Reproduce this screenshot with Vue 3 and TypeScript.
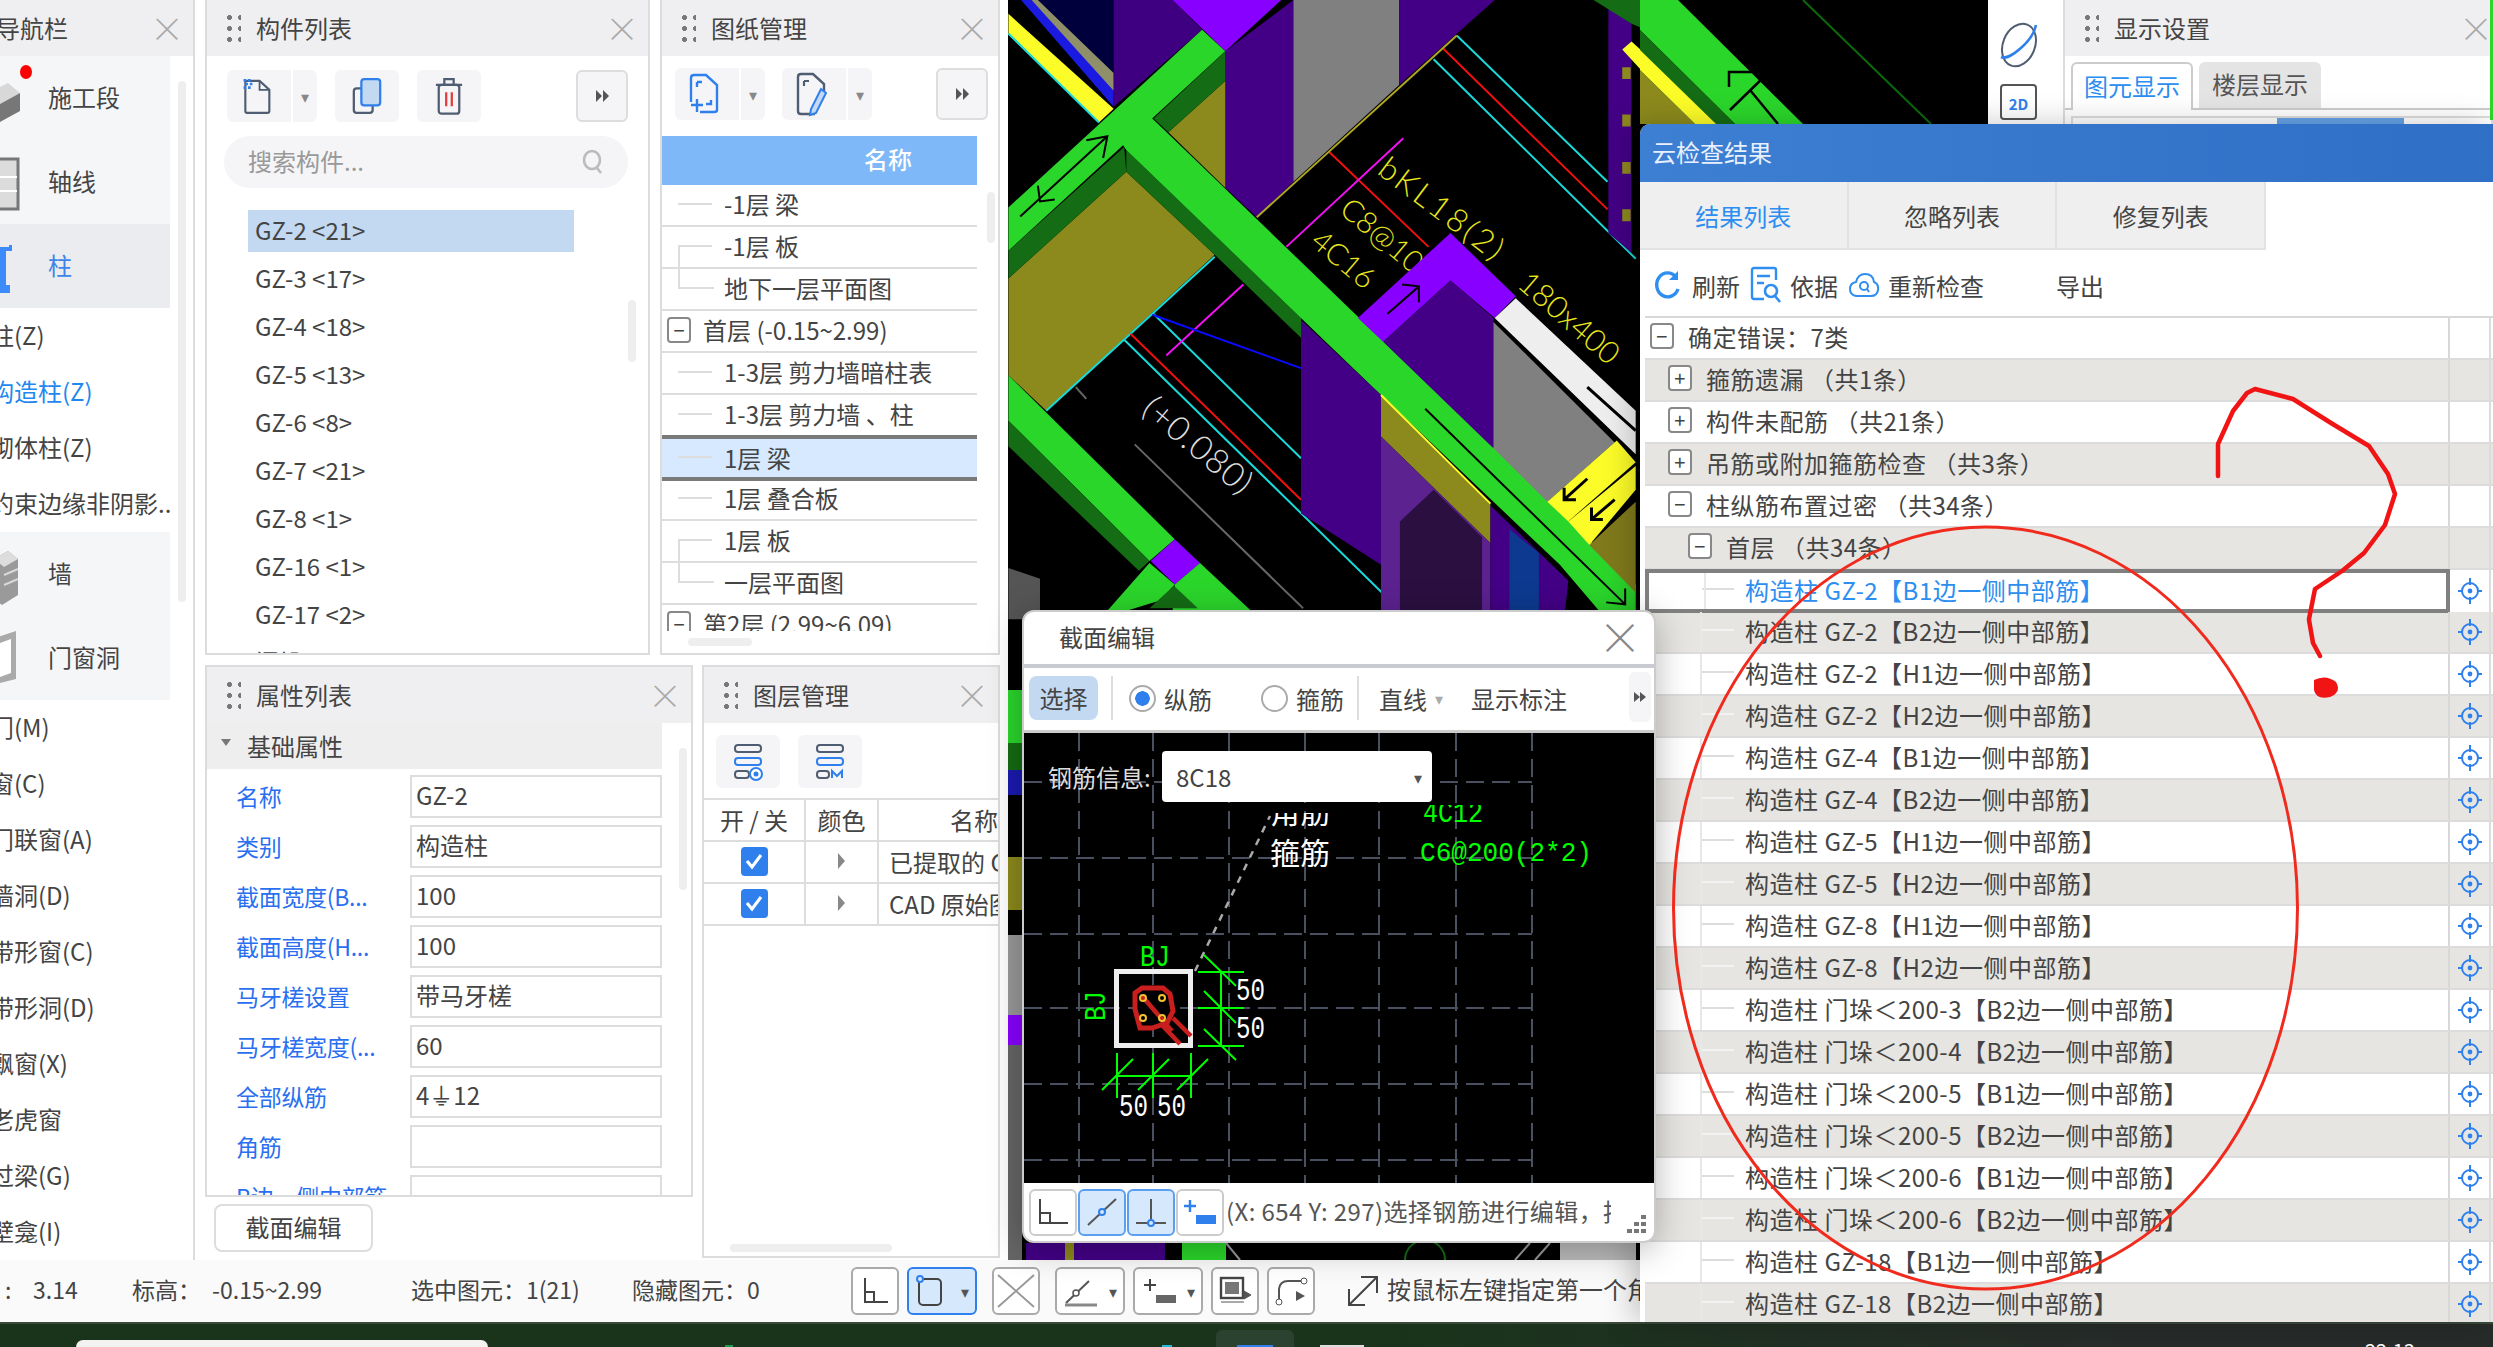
<script setup lang="ts">
const navRows: { t: string; kind: string; icon?: string; color?: string }[] = [
  { t: '施工段', kind: 'big', icon: 'seg' },
  { t: '轴线', kind: 'big', icon: 'axis' },
  { t: '柱', kind: 'active', icon: 'col' },
  { t: '柱(Z)', kind: 'sub' },
  { t: '构造柱(Z)', kind: 'sub', color: 'blue' },
  { t: '砌体柱(Z)', kind: 'sub' },
  { t: '约束边缘非阴影..', kind: 'sub' },
  { t: '墙', kind: 'big', icon: 'wall' },
  { t: '门窗洞', kind: 'big', icon: 'door' },
  { t: '门(M)', kind: 'sub' },
  { t: '窗(C)', kind: 'sub' },
  { t: '门联窗(A)', kind: 'sub' },
  { t: '墙洞(D)', kind: 'sub' },
  { t: '带形窗(C)', kind: 'sub' },
  { t: '带形洞(D)', kind: 'sub' },
  { t: '飘窗(X)', kind: 'sub' },
  { t: '老虎窗', kind: 'sub' },
  { t: '过梁(G)', kind: 'sub' },
  { t: '壁龛(I)', kind: 'sub' }
]
const parts = ['GZ-2 <21>', 'GZ-3 <17>', 'GZ-4 <18>', 'GZ-5 <13>', 'GZ-6 <8>', 'GZ-7 <21>', 'GZ-8 <1>', 'GZ-16 <1>', 'GZ-17 <2>', '门垛 200-3 <1 100*150>']
const drawings: { t: string; box?: string; sel?: boolean; last?: boolean }[] = [
  { t: '-1层 梁' },
  { t: '-1层 板' },
  { t: '地下一层平面图', last: true },
  { t: '首层 (-0.15~2.99)', box: '−' },
  { t: '1-3层 剪力墙暗柱表' },
  { t: '1-3层 剪力墙 、柱' },
  { t: '1层 梁', sel: true },
  { t: '1层 叠合板' },
  { t: '1层 板' },
  { t: '一层平面图', last: true },
  { t: '第2层 (2.99~6.09)', box: '−' }
]
const props = [
  ['名称', 'GZ-2'],
  ['类别', '构造柱'],
  ['截面宽度(B...', '100'],
  ['截面高度(H...', '100'],
  ['马牙槎设置', '带马牙槎'],
  ['马牙槎宽度(...', '60'],
  ['全部纵筋', '4⏚12'],
  ['角筋', ''],
  ['B边一侧中部筋', '']
]
const layers = ['已提取的 CAD 图层', 'CAD 原始图层']
const statusItems: [string, number][] = [
  [':', 28],
  ['3.14', 99],
  ['标高：', 80],
  ['-0.15~2.99', 199],
  ['选中图元：1(21)', 221],
  ['隐藏图元：0', 220]
]
const checks: { t: string; l: number; box?: string }[] = [
  { t: '确定错误：7类', l: 0, box: '−' },
  { t: '箍筋遗漏 （共1条）', l: 1, box: '+' },
  { t: '构件未配筋 （共21条）', l: 1, box: '+' },
  { t: '吊筋或附加箍筋检查 （共3条）', l: 1, box: '+' },
  { t: '柱纵筋布置过密 （共34条）', l: 1, box: '−' },
  { t: '首层 （共34条）', l: 2, box: '−' },
  ...[
    'GZ-2【B1', 'GZ-2【B2', 'GZ-2【H1', 'GZ-2【H2', 'GZ-4【B1', 'GZ-4【B2', 'GZ-5【H1', 'GZ-5【H2', 'GZ-8【H1', 'GZ-8【H2',
    '门垛＜200-3【B2', '门垛＜200-4【B2', '门垛＜200-5【B1', '门垛＜200-5【B2', '门垛＜200-6【B1', '门垛＜200-6【B2', 'GZ-18【B1', 'GZ-18【B2'
  ].map((s) => ({ t: '构造柱 ' + s + '边一侧中部筋】', l: 3 }))
]
const gridH = [781, 857, 933, 1007, 1083, 1159]
const gridV = [1079, 1153, 1229, 1305, 1379, 1456, 1532]
</script>

<template>
  <div class="app">
    <div class="upper">
      <!-- navigation -->
      <aside class="nav">
        <header class="phead nav-head"><span>导航栏</span><i class="x">×</i></header>
        <div class="nav-list">
          <div v-for="r in navRows" :key="r.t" class="nrow" :class="[r.kind, r.color]">
            <svg v-if="r.icon" class="nic" viewBox="0 0 48 56">
              <template v-if="r.icon === 'seg'">
                <path d="M-12 24 8 14 20 24 -2 36Z" fill="#d8d8d8" />
                <path d="M-2 36 20 24V42L-2 54Z" fill="#777" />
              </template>
              <template v-if="r.icon === 'axis'">
                <path d="M-6 6H18V56H-6Z" fill="#dcdcdc" stroke="#777" stroke-width="3" />
                <path d="M-6 24H17M-6 38H17" stroke="#fff" stroke-width="2" />
              </template>
              <template v-if="r.icon === 'col'">
                <path d="M0 10H9V8H12V14H6V48H10V56H-4V6H0Z" fill="#3d8bfa" />
              </template>
              <template v-if="r.icon === 'wall'">
                <path d="M-6 14 8 6 18 14 18 50 2 60-6 54Z" fill="#9a9a9a" />
                <path d="M-6 14 8 6 18 14 4 22Z" fill="#ddd" />
                <path d="M4 30 18 24M4 40 18 34" stroke="#d8d8d8" stroke-width="2" />
              </template>
              <template v-if="r.icon === 'door'">
                <path d="M-8 10 16 2V50L-8 56Z" fill="#aaa" />
                <path d="M0 14 11 10V44L0 48Z" fill="#fff" />
              </template>
            </svg>
            <span class="ntext">{{ r.t }}</span>
          </div>
        </div>
        <b class="reddot"></b>
        <b class="nav-scroll"></b>
      </aside>

      <!-- docked panels -->
      <section class="docks">
        <div class="dock-row top">
          <div class="panel parts">
            <header class="phead"><i class="grip"></i><span>构件列表</span><i class="x">×</i></header>
            <div class="tools">
              <div class="tbtn split">
                <span class="tmain">
                  <svg width="32" height="42" viewBox="0 0 36 42">
                    <path d="M6 4H22L33 14V38Q33 40 31 40H8Q6 40 6 38Z" fill="none" stroke="#4f5d72" stroke-width="2.4" />
                    <path d="M22 4V14H33" fill="none" stroke="#4f5d72" stroke-width="2" />
                    <path d="M4 2h3v3H4zM9 2h3v3H9zM6 6h3v3H6zM11 6h3v3h-3zM4 10h3v3H4zM9 10h3v3H9z" fill="#2f80ed" />
                  </svg>
                </span>
                <span class="tdrop">▾</span>
              </div>
              <div class="tbtn">
                <svg width="32" height="42" viewBox="0 0 34 42">
                  <rect x="3" y="13" width="20" height="26" rx="3" fill="none" stroke="#4f5d72" stroke-width="2.4" />
                  <rect x="11" y="3" width="20" height="28" rx="3" fill="#c3d9f2" stroke="#2f80ed" stroke-width="2.4" />
                </svg>
              </div>
              <div class="tbtn">
                <svg width="28" height="44" viewBox="0 0 30 44">
                  <path d="M1 10H29M10 10V4H20V10" fill="none" stroke="#4f5d72" stroke-width="2.4" />
                  <rect x="4" y="10" width="22" height="31" rx="3" fill="none" stroke="#4f5d72" stroke-width="2.4" />
                  <path d="M12 18V33M18 18V33" stroke="#e23b3b" stroke-width="2.4" />
                </svg>
              </div>
              <button class="more"><i class="tri"></i><i class="tri"></i></button>
            </div>
            <div class="search">
              <span>搜索构件...</span>
              <svg width="22" height="26" viewBox="0 0 22 26">
                <ellipse cx="10" cy="12" rx="8" ry="9" fill="none" stroke="#bbb" stroke-width="2.6" />
                <path d="M15 20 19 25" stroke="#bbb" stroke-width="2.6" />
              </svg>
            </div>
            <ul class="plist">
              <li v-for="(p, i) in parts" :key="p" :class="{ on: i === 0 }">{{ p }}</li>
            </ul>
            <b class="pscroll"></b>
          </div>

          <div class="panel draws">
            <header class="phead"><i class="grip"></i><span>图纸管理</span><i class="x">×</i></header>
            <div class="tools dtools">
              <div class="tbtn split">
                <span class="tmain">
                  <svg width="32" height="44" viewBox="0 0 32 44">
                    <path d="M3 30V6Q3 3 6 3H18L29 13V38Q29 40 26 40H12" fill="none" stroke="#2f80ed" stroke-width="2.4" />
                    <path d="M9 10H14M9 10V15M23 28V32H18M3 33H15M9 27V40" fill="none" stroke="#2f80ed" stroke-width="2.4" />
                  </svg>
                </span>
                <span class="tdrop">▾</span>
              </div>
              <div class="tbtn split">
                <span class="tmain">
                  <svg width="32" height="46" viewBox="0 0 32 46">
                    <path d="M20 43H6Q3 43 3 40V6Q3 3 6 3H18L29 13V20" fill="none" stroke="#4f5d72" stroke-width="2.4" />
                    <path d="M9 10H14M9 10V15" fill="none" stroke="#4f5d72" stroke-width="2.2" />
                    <path d="M26 18 31 22 21 42 15 44 16 38Z" fill="#c3d9f2" stroke="#2f80ed" stroke-width="2" />
                  </svg>
                </span>
                <span class="tdrop">▾</span>
              </div>
              <button class="more"><i class="tri"></i><i class="tri"></i></button>
            </div>
            <div class="dhead">名称</div>
            <div class="dtree">
              <div v-for="d in drawings" :key="d.t" class="drow" :class="{ sel: d.sel, folder: d.box }">
                <i v-if="d.box" class="box">{{ d.box }}</i>
                <i v-else class="guide" :class="{ end: d.last }"></i>
                <span>{{ d.t }}</span>
              </div>
            </div>
            <b class="dscroll-v"></b>
            <b class="dscroll-h"></b>
          </div>
        </div>

        <div class="dock-row bottom">
          <div class="prop-col">
            <div class="panel props">
              <header class="phead"><i class="grip"></i><span>属性列表</span><i class="x">×</i></header>
              <div class="pgroup"><i class="tri-d"></i>基础属性</div>
              <div class="pbody">
                <div v-for="p in props" :key="p[0]" class="prow">
                  <label>{{ p[0] }}</label>
                  <div class="pval">{{ p[1] }}</div>
                </div>
              </div>
              <b class="pr-scroll"></b>
            </div>
            <button class="secbtn">截面编辑</button>
          </div>
          <div class="panel layers">
            <header class="phead"><i class="grip"></i><span>图层管理</span><i class="x">×</i></header>
            <div class="tools ltools">
              <div class="tbtn sq">
                <svg width="32" height="40" viewBox="0 0 32 40">
                  <rect x="3" y="3" width="26" height="7" rx="3" fill="none" stroke="#4f5d72" stroke-width="2" />
                  <rect x="3" y="16" width="26" height="7" rx="3" fill="none" stroke="#2f80ed" stroke-width="2" />
                  <rect x="3" y="29" width="14" height="7" rx="3" fill="none" stroke="#4f5d72" stroke-width="2" />
                  <circle cx="24" cy="32" r="6" fill="#fff" stroke="#2f80ed" stroke-width="2" />
                  <circle cx="24" cy="32" r="2.5" fill="#2f80ed" />
                </svg>
              </div>
              <div class="tbtn sq">
                <svg width="32" height="40" viewBox="0 0 32 40">
                  <rect x="3" y="3" width="26" height="7" rx="3" fill="none" stroke="#4f5d72" stroke-width="2" />
                  <rect x="3" y="16" width="26" height="7" rx="3" fill="none" stroke="#2f80ed" stroke-width="2" />
                  <rect x="3" y="29" width="12" height="7" rx="3" fill="none" stroke="#4f5d72" stroke-width="2" />
                  <path d="M18 36V29L23 34 28 29V36" fill="none" stroke="#2f80ed" stroke-width="2" />
                </svg>
              </div>
            </div>
            <div class="ltable">
              <div class="lrow lhead"><span class="c1">开 / 关</span><span class="c2">颜色</span><span class="c3 right">名称</span></div>
              <div v-for="l in layers" :key="l" class="lrow">
                <span class="c1"><i class="chk"><svg width="20" height="20" viewBox="0 0 20 20"><path d="M3 10 8 16 17 4" fill="none" stroke="#fff" stroke-width="3" /></svg></i></span>
                <span class="c2"><i class="tri gray"></i></span>
                <span class="c3">{{ l }}</span>
              </div>
            </div>
            <b class="l-scroll"></b>
          </div>
        </div>
      </section>

      <!-- 3D canvas -->
      <main class="canvas">
        <svg width="980" height="1260" viewBox="1008 0 980 1260">
          <rect x="1008" y="0" width="980" height="1260" fill="#000" />
          <g class="z" transform="translate(1000 0) scale(.421 .395)">
            <!-- top-left beam -->
            <path d="M75 0H270V190Z" fill="#00003c" />
            <path d="M50 0H75L270 205V270Z" fill="#1a1ae0" />
            <path d="M75 0H90L270 185V230Z" fill="#8f8f6a" />
            <path d="M20 35 270 275 235 310 20 88Z" fill="#fcfc28" />
            <path d="M20 85 235 310" stroke="#19d9d9" stroke-width="2" fill="none" />
            <!-- columns -->
            <path d="M270 0H410L480 75 270 270Z" fill="#3e0080" />
            <path d="M535 130 697 0V460L610 550 535 475Z" fill="#430086" />
            <path d="M410 0H668L535 130Z" fill="#8800ff" />
            <path d="M697 0H948V215L697 460Z" fill="#808080" />
            <path d="M948 0H1175L948 215Z" fill="#430086" />
            <path d="M400 335 535 205V475Z" fill="#8c8a1c" />
            <path d="M20 705 300 435 510 645 110 1040 20 950Z" fill="#8c8a1c" />
            <!-- lines -->
            <path d="M1085 90 1443 460M1030 150 1510 655M510 650 110 1040M365 795 715 1160M295 860 950 1545" stroke="#19d9d9" stroke-width="2" fill="none" />
            <path d="M1052 122 1443 530M782 385 1018 625M310 845 715 1265" stroke="#f01010" stroke-width="2" fill="none" />
            <path d="M958 350 680 625M578 720 395 900" stroke="#f010f0" stroke-width="2" fill="none" />
            <path d="M362 797 715 932" stroke="#0a0aff" stroke-width="2" fill="none" />
            <path d="M1085 90 610 550" stroke="#b0a820" stroke-width="2" fill="none" />
            <path d="M320 1125 720 1540M180 980 205 1010" stroke="#666" stroke-width="2" fill="none" />
          </g>
          <!-- annotations lying under the upper geometry -->
          <text class="cad" transform="translate(1376 173) rotate(37)">bKL18(2)</text>
          <text class="cad t" transform="translate(1338 212) rotate(40)">C8@10(</text>
          <text class="cad t" transform="translate(1309 244) rotate(40)">4C16</text>
          <text class="cad n" transform="translate(1516 286) rotate(41)">180x400</text>
          <text class="cad w" transform="translate(1140 412) rotate(40)">(+0.080)</text>
          <g class="z" transform="translate(1000 0) scale(.421 .395)">
            <!-- upper-left arm -->
            <path d="M20 525 480 75 535 130 20 635Z" fill="#2bd62b" />
            <path d="M535 130V205L400 335 365 300Z" fill="#146c14" />
            <path d="M20 635 295 372 300 435 20 705Z" fill="#146c14" />
            <!-- main diagonal -->
            <path d="M510 645 300 435V380L715 805V855Z" fill="#146c14" />
            <path d="M265 325 360 298 1510 1480V1568H1440L1330 1430 905 1000 300 380Z" fill="#2bd62b" />
            <!-- lower-left arm -->
            <path d="M20 950 415 1365 355 1420 20 1065Z" fill="#2bd62b" />
            <path d="M20 1065 355 1420 330 1445 20 1130Z" fill="#146c14" />
            <path d="M415 1365 475 1425 415 1480 358 1420Z" fill="#8800ff" />
            <path d="M355 1425 415 1480 380 1520 235 1568V1570Z" fill="#2bd62b" />
            <path d="M475 1425 595 1545 410 1545 415 1480Z" fill="#2bd62b" />
            <path d="M413 1483 470 1540H355Z" fill="#146c14" />
            <path d="M20 1438 95 1465V1568H20Z" fill="#555" />
            <!-- middle column -->
            <path d="M715 810 905 1000V1430L715 1300Z" fill="#430086" />
            <path d="M850 805 1070 590 1225 750 1175 805 1070 710 910 865Z" fill="#8800ff" />
            <path d="M910 865 1070 710 1172 805V1135Z" fill="#430086" />
            <path d="M1172 815 1460 1120 1300 1270 1172 1135Z" fill="#808080" />
            <path d="M1175 805 1225 755 1510 1040V1150Z" fill="#eee" />
            <path d="M905 1000 1165 1275V1375L905 1105Z" fill="#8c8a1c" />
            <path d="M905 1000 1165 1275" stroke="#fcfc28" stroke-width="2" fill="none" />
            <path d="M1300 1270 1465 1115 1510 1170 1350 1320Z" fill="#fcfc28" />
            <path d="M1350 1320 1510 1180V1240L1400 1380Z" fill="#fcfc28" />
            <path d="M1400 1380 1510 1270V1500Z" fill="#807a1c" />
            <path d="M905 1105 1165 1375V1568H905Z" fill="#5c2290" />
            <path d="M950 1320 1030 1240 1145 1360V1568H950Z" fill="#2a0f40" />
            <path d="M1165 1280 1350 1470 1340 1568H1165Z" fill="#430086" />
            <path d="M1210 1340 1280 1400V1568H1210Z" fill="#0d3a90" />
            <!-- right column -->
            <path d="M1445 20 1500 60V640L1445 590Z" fill="#430086" />
            <path d="M1478 170h20v30h-20zM1478 290h20v30h-20zM1478 410h20v30h-20zM1478 530h20v30h-20z" fill="#8c8a1c" />
            <path d="M1410 0H1568V90L1500 60Z" fill="#146c14" />
            <path d="M1478 125 1500 105 1568 170V230Z" fill="#fcfc28" />
            <!-- arrows -->
            <path d="M48 548 255 345M205 355 255 345 245 400M90 470 95 510 130 505" fill="none" stroke="#000" stroke-width="2" />
            <path d="M920 795 995 725M955 720 995 725 995 765" fill="none" stroke="#000" stroke-width="2" />
            <path d="M1010 1035 1485 1530M1440 1525 1485 1530 1485 1490" fill="none" stroke="#000" stroke-width="2" />
            <path d="M1395 980 1510 1090" fill="none" stroke="#000" stroke-width="3" />
            <path d="M1340 1265 1395 1212M1340 1235V1265H1368M1405 1315 1460 1265M1405 1285V1315H1432" fill="none" stroke="#000" stroke-width="3" />
          </g>
          <!-- right part of canvas, real coordinates -->
          <path d="M1640 0H1678L1803 124H1735L1640 30Z" fill="#2bd62b" />
          <path d="M1640 30 1735 124H1690L1640 75Z" fill="#146c14" />
          <path d="M1640 50 1716 124H1695L1640 70Z" fill="#fcfc28" />
          <path d="M1640 70 1695 124H1640Z" fill="#8c8a1c" />
          <path d="M1803 0 1931 124" stroke="#0a6a0a" stroke-width="2" />
          <path d="M1730 110 1769 72 M1729 87V72H1752" fill="none" stroke="#000" stroke-width="2.5" />
          <path d="M1750 90 1778 124" stroke="#000" stroke-width="2.5" />
          <!-- strips left/below the dialog -->
          <rect x="1008" y="690" width="14" height="53" fill="#2bd62b" />
          <rect x="1008" y="743" width="14" height="27" fill="#146c14" />
          <rect x="1008" y="770" width="14" height="25" fill="#1a1ab0" />
          <rect x="1008" y="795" width="14" height="62" fill="#000" />
          <rect x="1008" y="857" width="14" height="53" fill="#8c8a1c" />
          <rect x="1008" y="935" width="14" height="80" fill="#999" />
          <rect x="1008" y="1015" width="14" height="30" fill="#8800ff" />
          <rect x="1008" y="1045" width="14" height="215" fill="#666" />
          <rect x="1026" y="1243" width="39" height="17" fill="#430086" />
          <rect x="1065" y="1243" width="9" height="17" fill="#8c8a1c" />
          <rect x="1074" y="1243" width="91" height="17" fill="#430086" />
          <rect x="1182" y="1243" width="44" height="17" fill="#2bd62b" />
          <path d="M1226 1243 1240 1260M1530 1243 1515 1260M1550 1243 1535 1260" stroke="#999" stroke-width="2" />
          <circle cx="1425" cy="1260" r="20" fill="none" stroke="#146c14" stroke-width="2" />
          <rect x="1560" y="1243" width="76" height="17" fill="#bbb" />
        </svg>
      </main>

      <div class="strip">
        <svg width="44" height="52" viewBox="0 0 44 52" class="planet">
          <ellipse cx="22" cy="26" rx="16" ry="22" fill="none" stroke="#4f5d72" stroke-width="2" transform="rotate(22 22 26)" />
          <path d="M4 38C12 42 36 22 39 6" fill="none" stroke="#2f80ed" stroke-width="2.6" />
        </svg>
        <div class="two-d">2D</div>
      </div>

      <aside class="display">
        <header class="phead"><i class="grip"></i><span>显示设置</span><i class="x dx">×</i></header>
        <div class="dtabs"><span class="on">图元显示</span><span>楼层显示</span></div>
        <div class="dshow"><b></b></div>
        <b class="greenline"></b>
      </aside>
    </div>

    <!-- status bar -->
    <footer class="status">
      <span v-for="s in statusItems" :key="s[0]" class="sitem" :style="{ width: s[1] + 'px' }">{{ s[0] }}</span>
      <div class="sbtns">
        <button class="sb">
          <svg width="30" height="30" viewBox="0 0 30 30"><path d="M5 2V26H28M5 16H14V26" fill="none" stroke="#444" stroke-width="2" /></svg>
        </button>
        <button class="sb on w70">
          <svg width="30" height="34" viewBox="0 0 30 34"><rect x="4" y="5" width="22" height="26" rx="4" fill="none" stroke="#444" stroke-width="2" /><circle cx="5" cy="5" r="3" fill="#d6e8fb" stroke="#2f80ed" stroke-width="2" /></svg>
          <i class="dn">▾</i>
        </button>
        <button class="sb gap">
          <svg width="44" height="36" viewBox="0 0 44 36"><path d="M4 2 40 34M40 2 4 34" stroke="#999" stroke-width="2" /></svg>
        </button>
        <button class="sb w70 gap">
          <svg width="36" height="32" viewBox="0 0 36 32"><path d="M3 28 26 6" stroke="#555" stroke-width="2" /><path d="M2 30H34" stroke="#888" stroke-width="3" /><circle cx="13" cy="18" r="3" fill="#fff" stroke="#555" stroke-width="1.5" /></svg>
          <i class="dn">▾</i>
        </button>
        <button class="sb w70">
          <svg width="36" height="32" viewBox="0 0 36 32"><path d="M3 10H15M9 4V16" stroke="#444" stroke-width="2" /><rect x="15" y="20" width="20" height="8" fill="#666" /></svg>
          <i class="dn">▾</i>
        </button>
        <button class="sb">
          <svg width="34" height="32" viewBox="0 0 34 32"><rect x="3" y="3" width="22" height="20" fill="none" stroke="#444" stroke-width="2.4" /><rect x="7" y="7" width="14" height="12" fill="#777" /><path d="M3 27H26M26 16V24L33 20Z" fill="#555" stroke="#555" /></svg>
        </button>
        <button class="sb">
          <svg width="34" height="32" viewBox="0 0 34 32"><path d="M5 28V14Q6 6 14 6H30" fill="none" stroke="#555" stroke-width="2" /><circle cx="5" cy="27" r="3" fill="#fff" stroke="#555" /><circle cx="30" cy="6" r="3" fill="#fff" stroke="#555" /><path d="M22 16 31 21 22 26Z" fill="#555" /></svg>
        </button>
      </div>
      <svg class="diag" width="32" height="32" viewBox="0 0 32 32"><path d="M2 30 30 2M14 2H30V18M2 14V30H18" fill="none" stroke="#444" stroke-width="2" /></svg>
      <span class="hint">按鼠标左键指定第一个角点</span>
    </footer>

    <div class="taskbar">
      <i class="pill"></i>
      <i class="tk green"></i>
      <i class="tk cyan"></i>
      <div class="tile"><i class="tk blue"></i></div>
      <i class="tk grayb"></i>
      <span class="clock">22:13</span>
    </div>

    <!-- cloud check window -->
    <section class="cloud">
      <header class="chead">云检查结果</header>
      <nav class="ctabs"><span class="on">结果列表</span><span>忽略列表</span><span>修复列表</span></nav>
      <div class="ctools">
        <svg class="ci1" width="28" height="32" viewBox="0 0 28 32"><path d="M24 20A11 12 0 1 1 22 8" fill="none" stroke="#2f8ef0" stroke-width="3.4" /><path d="M24 2V11H15" fill="#2f8ef0" /></svg>
        <span class="ct1">刷新</span>
        <svg class="ci2" width="32" height="38" viewBox="0 0 32 38"><path d="M14 33H4Q2 33 2 31V4Q2 2 4 2H24Q26 2 26 4V14" fill="none" stroke="#2f8ef0" stroke-width="2.4" /><path d="M7 10H20M7 17H14" stroke="#2f8ef0" stroke-width="2.4" /><circle cx="21" cy="25" r="6" fill="none" stroke="#2f8ef0" stroke-width="2.6" /><path d="M25 30 30 36" stroke="#2f8ef0" stroke-width="2.6" /></svg>
        <span class="ct2">依据</span>
        <svg class="ci3" width="32" height="28" viewBox="0 0 32 28"><path d="M9 25H8Q2 24 2 18 2 12 8 11 10 3 17 3 25 3 26 11 31 13 30 19 29 25 23 25Z" fill="none" stroke="#2f8ef0" stroke-width="2" /><circle cx="16" cy="15" r="4" fill="none" stroke="#2f8ef0" stroke-width="2" /><path d="M19 18 21 21" stroke="#2f8ef0" stroke-width="2" /></svg>
        <span class="ct3">重新检查</span>
        <span class="ct4">导出</span>
      </div>
      <div class="ctree">
        <div v-for="(c, i) in checks" :key="c.t + i" class="crow" :class="{ alt: i % 2 === 1, sel: i === 6, blue: i === 6 }">
          <div class="cmain" :class="'lv' + c.l">
            <i v-if="c.box" class="box">{{ c.box }}</i>
            <i v-else class="cdash"></i>
            <span>{{ c.t }}</span>
          </div>
          <div class="cact">
            <svg v-if="c.l === 3" width="26" height="28" viewBox="0 0 26 28">
              <circle cx="13" cy="14" r="8" fill="none" stroke="#2f80ed" stroke-width="2" />
              <path d="M13 1V8M13 20V27M1 14H6M20 14H25" stroke="#2f80ed" stroke-width="2" />
              <circle cx="13" cy="14" r="2.4" fill="#2f80ed" />
            </svg>
          </div>
        </div>
      </div>
    </section>

    <!-- section editor window -->
    <section class="editor">
      <header class="ehead"><span>截面编辑</span><i class="ex">×</i></header>
      <div class="etools">
        <span class="esel">选择</span>
        <i class="sep"></i>
        <i class="radio on"></i><span class="rt">纵筋</span>
        <i class="radio r2"></i><span class="rt">箍筋</span>
        <i class="sep s2"></i>
        <span class="eline">直线</span><i class="dn e">▾</i>
        <span class="emark">显示标注</span>
        <button class="more emore"><i class="tri"></i><i class="tri"></i></button>
      </div>
      <div class="eblack">
        <svg width="630" height="450" viewBox="1024 732 630 450">
          <path v-for="y in gridH" :key="'h' + y" :d="`M1024 ${y}H1532`" class="grid" />
          <path v-for="x in gridV" :key="'v' + x" :d="`M${x} 732V1182`" class="grid" />
          <path d="M1195 970 1270 815" stroke="#aaa" stroke-width="2.5" stroke-dasharray="7 7" fill="none" />
          <clipPath id="clipA"><rect x="1024" y="812" width="630" height="14" /></clipPath>
          <clipPath id="clipB"><rect x="1024" y="804" width="630" height="30" /></clipPath>
          <g clip-path="url(#clipA)">
            <text x="1270" y="822" class="cn">角筋</text>
          </g>
          <g clip-path="url(#clipB)">
            <text x="1423" y="821" class="mono g" textLength="60" lengthAdjust="spacingAndGlyphs" font-size="30">4C12</text>
          </g>
          <text x="1270" y="863" class="cn">箍筋</text>
          <text x="1420" y="860" class="mono g" textLength="172" lengthAdjust="spacingAndGlyphs" font-size="28">C6@200(2*2)</text>
          <!-- section -->
          <text x="1140" y="965" class="mono g" textLength="30" lengthAdjust="spacingAndGlyphs" font-size="30">BJ</text>
          <text class="mono g" transform="translate(1105 1020) rotate(-90)" textLength="30" lengthAdjust="spacingAndGlyphs" font-size="30">BJ</text>
          <rect x="1116.5" y="970.5" width="74" height="74" fill="none" stroke="#eee" stroke-width="5" />
          <path d="M1135 992 1142 987H1163L1170 993 1173 1010 1167 1022 1152 1027H1140L1135 1008Z" fill="#000" stroke="#c81e1e" stroke-width="5" />
          <path d="M1142 995 1172 1030M1160 1022 1180 1043M1173 1017 1191 1035" stroke="#c81e1e" stroke-width="4.5" fill="none" />
          <circle v-for="p in [[1143,997],[1162,997],[1143,1017],[1162,1017]]" :key="p.join()" :cx="p[0]" :cy="p[1]" r="3" fill="none" stroke="#f2c230" stroke-width="2" />
          <path d="M1221 971V1045M1198 971H1244M1198 1007H1244M1198 1045H1244M1204 954 1236 985M1204 990 1236 1022M1204 1028 1236 1059M1117 1075H1190M1117 1052V1097M1153 1052V1097M1191 1052V1097M1102 1089 1133 1058M1138 1089 1169 1058M1177 1089 1208 1058" stroke="#0f0" stroke-width="2" fill="none" />
          <text x="1236" y="999" class="mono w" textLength="29" lengthAdjust="spacingAndGlyphs" font-size="32">50</text>
          <text x="1236" y="1037" class="mono w" textLength="29" lengthAdjust="spacingAndGlyphs" font-size="32">50</text>
          <text x="1119" y="1115" class="mono w" textLength="29" lengthAdjust="spacingAndGlyphs" font-size="32">50</text>
          <text x="1157" y="1115" class="mono w" textLength="29" lengthAdjust="spacingAndGlyphs" font-size="32">50</text>
        </svg>
        <div class="einfo"><label>钢筋信息:</label><div class="combo"><span>8C18</span><i class="dn">▾</i></div></div>
      </div>
      <div class="efoot">
        <button class="fb">
          <svg width="34" height="32" viewBox="0 0 34 32"><path d="M4 3V27H32M4 17H14V27" fill="none" stroke="#444" stroke-width="2" /></svg>
        </button>
        <button class="fb on">
          <svg width="34" height="32" viewBox="0 0 34 32"><path d="M3 29 31 3" stroke="#555" stroke-width="2" /><circle cx="17" cy="16" r="3" fill="#d6e8fb" stroke="#2f80ed" stroke-width="2" /></svg>
        </button>
        <button class="fb on">
          <svg width="34" height="32" viewBox="0 0 34 32"><path d="M17 3V27M2 27H32" stroke="#555" stroke-width="2" /><circle cx="17" cy="27" r="3" fill="#d6e8fb" stroke="#2f80ed" stroke-width="2" /></svg>
        </button>
        <button class="fb">
          <svg width="36" height="32" viewBox="0 0 36 32"><path d="M2 10H14M8 4V16" stroke="#2f80ed" stroke-width="2.4" /><rect x="14" y="19" width="20" height="9" fill="#2f80ed" /></svg>
        </button>
        <span class="etext">(X: 654 Y: 297)选择钢筋进行编辑，按</span>
        <svg class="resize" width="20" height="20" viewBox="0 0 20 20"><path d="M14 2h5v4h-5zM7 9h5v4H7zM14 9h5v4h-5zM0 16h5v4H0zM7 16h5v4H7zM14 16h5v4h-5z" fill="#777" /></svg>
      </div>
    </section>

    <!-- hand-drawn annotations -->
    <svg class="marks" width="2493" height="1347" viewBox="0 0 2493 1347">
      <ellipse cx="1985.5" cy="908" rx="312" ry="381" fill="none" stroke="#f02a1c" stroke-width="3" />
      <path d="M2218 476V444L2233 411 2247 393 2255 389 2293 399 2331 423 2369 446 2388 474 2395 494 2385 525 2364 553 2342 571 2315 589 2309 619 2309 620 2313 643 2320 656" fill="none" stroke="#f01414" stroke-width="4.5" stroke-linejoin="round" stroke-linecap="round" />
      <path d="M2314 680Q2326 674 2336 682 2342 692 2330 697 2316 700 2314 690Z" fill="#f01414" />
    </svg>
  </div>
</template>

<style>
html, body { margin: 0; padding: 0; background: #fff; overflow: hidden; }
</style>

<style scoped>
.app {
  position: relative; width: 2493px; height: 1347px; overflow: hidden;
  display: flex; flex-direction: column; background: #fff;
  font-family: "Noto Sans CJK SC", "Liberation Sans", sans-serif; font-size: 24px; color: #444;
}
i { font-style: normal; }
button { font-family: inherit; font-size: inherit; color: inherit; padding: 0; }
ul { margin: 0; padding: 0; list-style: none; }
.upper { display: flex; height: 1260px; flex: none; }

.phead {
  height: 56px; flex: none; background: #efeff1; display: flex; align-items: center;
  padding-left: 20px; position: relative; color: #444; line-height: 1;
}
.grip { width: 14px; height: 28px; margin-right: 15px; flex: none;
  background-image: radial-gradient(#777 0 2.2px, transparent 2.7px);
  background-size: 11px 11px; background-position: -3px -2px; }
.x { margin-left: auto; margin-right: 9px; font-size: 34px; font-weight: 200; color: #aaa; line-height: 1; }

/* nav */
.nav { width: 195px; flex: none; position: relative; border-right: 2px solid #dcdcdc; box-sizing: border-box; overflow: hidden; }
.nav-head { padding-left: 0; }
.nav-head > span { margin-left: -4px; }
.nrow { display: flex; align-items: center; white-space: nowrap; box-sizing: border-box; padding-bottom: 3px; }
.nic { width: 48px; height: 56px; flex: none; overflow: visible; }
.big, .active { height: 84px; width: 170px; background: #f5f6f8; }
.active { background: #ebecf0; color: #3d85e8; }
.sub { height: 56px; width: 190px; }
.sub .ntext { margin-left: -10px; }
.sub.blue { color: #1e88f0; }
.reddot { position: absolute; left: 20px; top: 65px; width: 12px; height: 14px; border-radius: 50%; background: #f00; }
.nav-scroll { position: absolute; left: 178px; top: 81px; width: 8px; height: 521px; background: #eee; border-radius: 4px; }

/* docks */
.docks { width: 795px; margin-left: 10px; flex: none; display: flex; flex-direction: column; }
.dock-row { display: flex; }
.dock-row.top { height: 655px; gap: 10px; }
.dock-row.bottom { height: 593px; margin-top: 10px; gap: 9px; }
.panel { position: relative; display: flex; flex-direction: column; border: 2px solid #dcdcdc; border-top: 0; box-sizing: border-box; overflow: hidden; }
.parts { width: 445px; }
.draws { width: 340px; }
.tools { display: flex; padding: 14px 0 0 20px; height: 66px; box-sizing: border-box; flex: none; gap: 18px; position: relative; }
.tbtn { width: 64px; height: 52px; background: #f5f5f7; border-radius: 6px; display: flex; align-items: center; justify-content: center; flex: none; }
.tbtn.split { width: 90px; }
.tmain { flex: 1; height: 100%; display: flex; align-items: center; justify-content: center; border-right: 2px solid #fff; padding-right: 6px; box-sizing: border-box; }
.tdrop { width: 24px; text-align: center; color: #888; font-size: 16px; }
.more { position: absolute; right: 20px; top: 14px; width: 52px; height: 52px; background: #f5f5f7; border: 2px solid #ddd; border-radius: 6px; display: flex; align-items: center; justify-content: center; gap: 1px; }
.tri { width: 0; height: 0; border: 6px solid transparent; border-left: 6px solid #555; border-right: 0; display: block; }
.tri.gray { border-left-color: #888; border-width: 8px 0 8px 7px; }
.search { margin: 14px 20px 0 17px; height: 52px; background: #f5f5f7; border-radius: 26px; display: flex; align-items: center; justify-content: space-between; padding: 0 24px 3px; color: #999; flex: none; box-sizing: border-box; }
.plist { margin-top: 22px; flex: 1; overflow: hidden; }
.plist li { height: 48px; line-height: 39px; padding-left: 48px; white-space: nowrap; }
.plist li.on { background: linear-gradient(#c3d9f2, #c3d9f2) no-repeat 41px 0 / 326px 42px; border-radius: 6px; }
.pscroll { position: absolute; left: 421px; top: 300px; width: 8px; height: 62px; border-radius: 4px; background: #eee; }

.dtools { gap: 17px; padding: 12px 0 0 13px; }
.dtools .more { top: 12px; right: 10px; }
.dhead { height: 49px; width: 315px; margin-top: 14px; background: #7eb8f8; color: #fff; text-align: right; padding-right: 65px; box-sizing: border-box; line-height: 46px; flex: none; font-weight: 500; }
.dtree { width: 315px; height: 446px; flex: none; overflow: hidden; }
.drow { height: 42px; border-bottom: 2px solid #ddd; box-sizing: border-box; display: flex; align-items: center; position: relative; white-space: nowrap; padding-left: 62px; padding-bottom: 3px; }
.drow.folder { padding-left: 5px; }
.drow.sel { background: #d6e9ff; border: solid #7a7a7a; border-width: 4px 0; height: 46px; margin: -2px 0 -2px; padding-bottom: 2px; }
.guide { position: absolute; left: 16px; top: -22px; bottom: 50%; width: 34px; border-left: 2px solid #ddd; border-bottom: 2px solid #ddd; }
.guide:not(.end) { border-left: 0; }
.box { width: 24px; height: 26px; border: 2px solid #888; border-radius: 4px; box-sizing: border-box; flex: none; display: flex; align-items: center; justify-content: center; font-size: 20px; line-height: 1; margin-right: 12px; background: #fff; }
.dscroll-v { position: absolute; left: 325px; top: 192px; width: 8px; height: 51px; background: #eee; border-radius: 4px; }
.dscroll-h { position: absolute; left: 26px; top: 638px; width: 64px; height: 8px; background: #eee; border-radius: 4px; }

.prop-col { width: 488px; display: flex; flex-direction: column; }
.props { height: 532px; width: 488px; border-top: 2px solid #dcdcdc; }
.pgroup { height: 46px; width: 455px; background: #eee; flex: none; display: flex; align-items: center; padding: 0 0 1px 40px; box-sizing: border-box; position: relative; color: #444; }
.tri-d { position: absolute; left: 14px; top: 16px; border: 5px solid transparent; border-top: 7px solid #777; border-bottom: 0; }
.pbody { padding-top: 6px; flex: 1; overflow: hidden; }
.prow { height: 50px; display: flex; width: 455px; }
.prow label { width: 203px; padding-left: 29px; box-sizing: border-box; color: #2a6ff0; line-height: 42px; white-space: nowrap; font-size: 23px; letter-spacing: -.3px; }
.pval { width: 252px; height: 43px; border: 2px solid #ddd; box-sizing: border-box; line-height: 36px; padding-left: 4px; color: #444; }
.pr-scroll { position: absolute; left: 472px; top: 81px; width: 8px; height: 142px; background: #eee; border-radius: 4px; }
.secbtn { width: 159px; height: 48px; margin: 7px 0 0 9px; background: #fff; border: 2px solid #ddd; border-radius: 8px; line-height: 1; padding-bottom: 3px; }
.layers { width: 298px; border-top: 2px solid #dcdcdc; }
.ltools { padding-left: 12px; gap: 18px; height: 75px; padding-top: 12px; }
.tbtn.sq { width: 64px; height: 53px; }
.ltable { border-top: 2px solid #ddd; width: 100%; }
.lrow { display: flex; height: 42px; border-bottom: 2px solid #ddd; box-sizing: border-box; align-items: stretch; white-space: nowrap; }
.lrow > span { display: flex; align-items: center; overflow: hidden; box-sizing: border-box; padding-bottom: 2px; }
.c1 { width: 102px; justify-content: center; border-right: 2px solid #ddd; }
.c2 { width: 73px; justify-content: center; border-right: 2px solid #ddd; }
.c3 { flex: 1; padding-left: 10px; min-width: 0; }
.c3.right { justify-content: flex-end; padding-right: 0; }
.chk { width: 27px; height: 29px; background: #2f80ed; border-radius: 4px; display: flex; align-items: center; justify-content: center; }
.l-scroll { position: absolute; left: 26px; top: 577px; width: 162px; height: 8px; background: #eee; border-radius: 4px; }

/* canvas */
.canvas { width: 980px; height: 1260px; margin-left: 8px; flex: none; overflow: hidden; }
.canvas svg { display: block; }
.z * { vector-effect: non-scaling-stroke; }
.cad { font-family: "Lato", "Liberation Sans", sans-serif; font-size: 32px; fill: #e8e81c; letter-spacing: 3px; font-weight: 300; }
.cad.t { font-size: 30px; letter-spacing: 0; }
.cad.n { letter-spacing: 0; font-size: 31px; }
.cad.w { fill: #ddd; font-size: 34px; letter-spacing: 1px; }

.strip { width: 75px; flex: none; display: flex; flex-direction: column; align-items: flex-start; }
.planet { margin: 19px 0 0 9px; flex: none; }
.two-d { width: 37px; height: 36px; margin: 13px 0 0 12px; border: 2px solid #555; border-radius: 4px; box-sizing: border-box; color: #2f80ed; font-size: 15px; font-weight: 700; text-align: center; padding-top: 10px; line-height: 1; flex: none; }
.display { width: 430px; flex: none; position: relative; border-left: 2px solid #dcdcdc; box-sizing: border-box; }
.dx { margin-right: 0; }
.dtabs { display: flex; margin-top: 6px; height: 46px; padding-left: 6px; gap: 6px; border-bottom: 2px solid #ccc; }
.dtabs span { width: 122px; text-align: center; line-height: 44px; background: #e4e4e4; color: #555; border-radius: 6px 6px 0 0; }
.dtabs .on { background: #fff; color: #2b8ef0; border: 2px solid #ccc; border-bottom: 0; box-sizing: border-box; height: 48px; }
.dshow { height: 40px; margin: 6px 0 0 6px; border: 2px solid #ddd; position: relative; }
.dshow b { position: absolute; left: 204px; top: 0; width: 127px; height: 10px; background: #66a3e8; }
.greenline { position: absolute; right: 0; top: 0; width: 3px; height: 120px; background: #2bd62b; }

/* status */
.status { height: 62px; flex: none; background: #fafafa; display: flex; align-items: center; padding-left: 5px; white-space: nowrap; overflow: hidden; font-size: 23px; }
.sitem { flex: none; box-sizing: border-box; margin-top: -5px; }
.sbtns { display: flex; gap: 8px; flex: none; margin-left: -1px; }
.sb { width: 48px; height: 48px; background: #fff; border: 2px solid #aaa; border-radius: 6px; display: flex; align-items: center; justify-content: center; position: relative; box-sizing: border-box; }
.sb.w70 { width: 70px; justify-content: flex-start; padding-left: 6px; }
.sb.on { background: #d6e8fb; border-color: #2f80ed; }
.sb.gap { margin-left: 7px; }
.dn { color: #555; font-size: 16px; }
.sb .dn { position: absolute; right: 6px; top: 10px; }
.diag { margin-left: 32px; flex: none; }
.hint { margin-left: 8px; font-size: 24px; margin-top: -5px; }

/* taskbar */
.taskbar { flex: 1; background: linear-gradient(90deg, #19341a 0 55%, #272c2a 85%); border-top: 2px solid #3b4a3b; box-sizing: border-box; display: flex; align-items: flex-end; position: relative; overflow: hidden; }
.pill { width: 412px; height: 7px; margin-left: 76px; background: #f2f3f1; border-radius: 12px 12px 0 0; flex: none; }
.tk { display: block; height: 2px; flex: none; }
.tk.green { width: 8px; background: #1f9a50; margin-left: 237px; }
.tk.cyan { width: 10px; background: #25b8d8; margin-left: 429px; }
.tile { width: 78px; height: 17px; margin-left: 44px; background: #2c4230; border-radius: 6px 6px 0 0; display: flex; align-items: flex-end; justify-content: center; flex: none; }
.tk.blue { width: 36px; background: #2f80ed; }
.tk.grayb { width: 44px; background: #ddd; margin-left: 26px; }
.clock { position: absolute; left: 2365px; top: 17px; color: #fff; font-size: 20px; line-height: 1; }

/* cloud window */
.cloud { position: absolute; left: 1640px; top: 124px; width: 853px; height: 1198px; background: #fff; border-radius: 10px 0 0 0; overflow: hidden; box-shadow: -8px 0 30px rgba(0, 0, 0, .22); display: flex; flex-direction: column; z-index: 2; }
.chead { height: 58px; flex: none; background: linear-gradient(90deg, #3d7fd2, #2f6fc6); color: #e8f0ff; display: flex; align-items: center; padding: 0 0 4px 12px; box-sizing: border-box; }
.ctabs { display: flex; height: 68px; flex: none; width: 626px; }
.ctabs span { flex: 1; text-align: center; line-height: 68px; background: #efefef; border-right: 2px solid #e2e2e2; border-bottom: 2px solid #e2e2e2; }
.ctabs .on { color: #2b8ef0; }
.ctools { height: 68px; flex: none; display: flex; align-items: center; position: relative; padding-top: 2px; box-sizing: border-box; }
.ci1 { margin-left: 14px; }
.ct1 { margin-left: 10px; }
.ci2 { margin-left: 10px; }
.ct2 { margin-left: 8px; }
.ci3 { margin-left: 10px; }
.ct3 { margin-left: 8px; }
.ct4 { margin-left: 72px; }
.ctree { flex: 1; overflow: hidden; margin: -2px 0 0 5px; border-top: 2px solid #d8d8d8; }
.crow { height: 42px; box-sizing: border-box; display: flex; border-bottom: 2px solid #dcdcdc; background: #fff; white-space: nowrap; letter-spacing: .5px; }
.crow.alt { background: #e6e5e1; }
.crow.alt .cdash { background: #f2f2f2; }
.cmain { width: 805px; flex: none; display: flex; align-items: center; box-sizing: border-box; border-right: 2px solid #d8d8d8; position: relative; padding-bottom: 4px; }
.crow.sel { height: 44px; margin: -1px 0 -1px; border: 0; background: transparent; }
.crow.sel .cmain { border: 4px solid #808080; color: #2b8ef0; background: #fff; padding-left: 53px; padding-bottom: 4px; }
.lv0 { padding-left: 5px; }
.lv1 { padding-left: 23px; }
.lv2 { padding-left: 43px; }
.lv3 { padding-left: 57px; }
.lv1 .box, .lv2 .box, .lv0 .box { margin-right: 14px; }
.cdash { width: 32px; height: 2px; background: #ddd; margin-right: 11px; flex: none; }
.lv3::before { content: ""; position: absolute; left: 55px; top: 0; bottom: 0; border-left: 2px solid #e8e8e8; }
.cact { width: 39px; flex: none; display: flex; align-items: center; justify-content: center; border-right: 2px solid #dcdcdc; }

/* editor */
.editor { position: absolute; left: 1022px; top: 610px; width: 634px; height: 633px; background: #fff; border: 2px solid #ccc; box-sizing: border-box; border-radius: 12px; overflow: hidden; display: flex; flex-direction: column; z-index: 3; box-shadow: 0 6px 34px rgba(0, 0, 0, .28); }
.ehead { height: 50px; flex: none; display: flex; align-items: center; padding: 0 0 4px 35px; border-bottom: 4px solid #c8ccd2; box-sizing: border-box; height: 56px; }
.ex { margin-left: auto; margin-right: 12px; font-size: 44px; color: #888; font-weight: 200; line-height: 1; }
.etools { height: 64px; flex: none; display: flex; align-items: center; position: relative; border-bottom: 3px solid #ccc; padding-left: 5px; white-space: nowrap; margin-top: -2px; }
.esel { width: 69px; height: 44px; line-height: 44px; text-align: center; background: #c3d9f2; border-radius: 8px; flex: none; }
.sep { width: 2px; height: 44px; background: #ddd; margin-left: 13px; flex: none; }
.radio { width: 27px; height: 27px; box-sizing: border-box; border: 2px solid #aaa; border-radius: 50%; margin: 0 8px 0 16px; flex: none; background: #fff; }
.radio.on { background: radial-gradient(#2f80ed 0 7px, #fff 7.5px); }
.radio.r2 { margin-left: 49px; }
.rt { flex: none; }
.s2 { margin-left: 13px; }
.eline { margin-left: 20px; }
.dn.e { margin-left: 8px; color: #aaa; }
.emark { margin-left: 28px; }
.emore { top: 6px; right: 3px; width: 22px; height: 50px; border: 0; gap: 0; }
.emore .tri { border-width: 5px 0 5px 6px; }
.eblack { flex: 1; background: #000; position: relative; overflow: hidden; }
.eblack svg { display: block; }
.grid { stroke: #4a5060; stroke-width: 2; stroke-dasharray: 18 8; fill: none; }
.cn { font-family: "Noto Sans CJK SC", sans-serif; font-size: 30px; fill: #fff; }
.mono { font-family: "Liberation Mono", monospace; }
.g { fill: #0f0; }
.w { fill: #fff; }
.einfo { position: absolute; left: 24px; top: 18px; display: flex; align-items: center; }
.einfo label { color: #ddd; width: 114px; }
.combo { width: 270px; height: 51px; background: #fff; border-radius: 4px; display: flex; align-items: center; justify-content: space-between; padding: 0 10px 0 14px; box-sizing: border-box; }
.efoot { height: 58px; flex: none; display: flex; align-items: center; padding-left: 5px; position: relative; white-space: nowrap; overflow: hidden; }
.fb { width: 48px; height: 47px; background: #fff; border: 2px solid #ccc; border-radius: 6px; flex: none; display: flex; align-items: center; justify-content: center; margin-right: 1px; }
.fb.on { background: #d6e8fb; border-color: #5b9ff0; }
.etext { color: #555; margin-left: 1px; width: 385px; overflow: hidden; flex: none; letter-spacing: .4px; margin-top: -3px; }
.resize { position: absolute; right: 7px; bottom: 8px; }

.marks { position: absolute; left: 0; top: 0; pointer-events: none; z-index: 4; }
</style>
